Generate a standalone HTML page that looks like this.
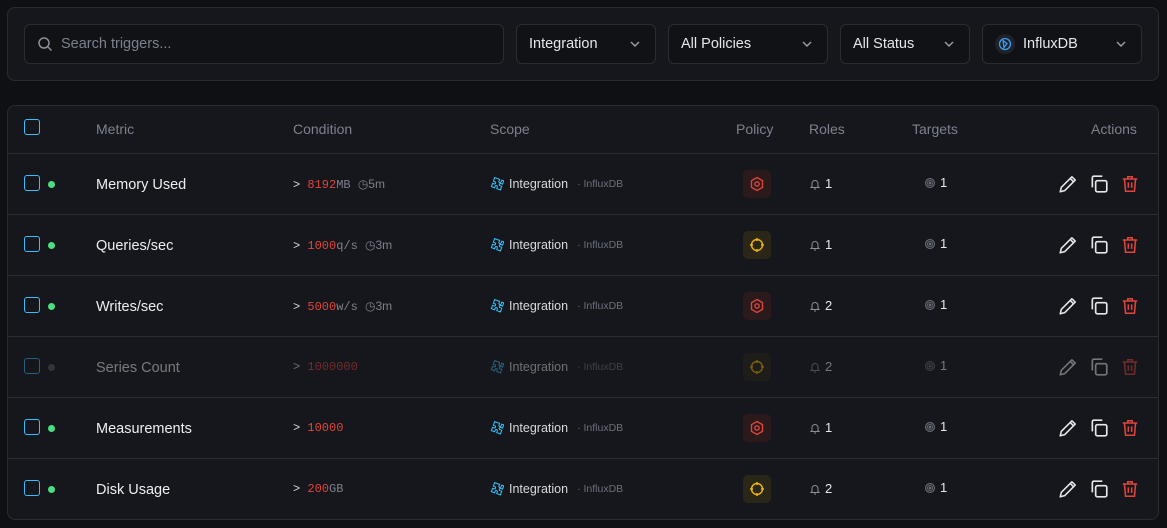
<!DOCTYPE html>
<html><head><meta charset="utf-8"><style>
*{box-sizing:border-box;margin:0;padding:0}
body{width:1167px;height:528px;background:#0f1014;font-family:"Liberation Sans",sans-serif;color:#e6e7ea;position:relative;overflow:hidden}
.abs{position:absolute}
.panel{position:absolute;left:7px;width:1152px;background:#16171c;border:1px solid #2a2c32;border-radius:8px}
.inp{position:absolute;top:24px;height:40px;background:#111216;border:1px solid #2a2c32;border-radius:6px;font-size:14.5px;display:flex;align-items:center;padding-left:12px}
.chev{position:absolute;right:14px;top:13px}
.hdr{position:absolute;top:121px;font-size:14px;color:#7c818d}
.row{position:absolute;left:8px;width:1150px;height:61px;border-top:1px solid #2a2c32}
.row>*{position:absolute}
.cb{left:16px;top:21px;width:16px;height:16px;border:1.5px solid #38bdf8;border-radius:3px}
.dot{left:40px;top:27px;width:7px;height:7px;border-radius:50%;background:#4ade80}
.metric{left:88px;top:23px;font-size:14.5px;color:#eceef1}
.cond{left:285px;top:23px;font-family:"Liberation Mono",monospace;font-size:12px;color:#d8d9dc}
.cond .v{color:#e0443a}.cond .u{color:#7c818d}
.scope{left:482px;top:23px;font-size:12.5px;color:#d8d9dc;display:flex;align-items:center;gap:5px}
.scope .s{font-size:10.5px;color:#6b707b;margin-left:4px}
.pol{left:735px;top:16px;width:28px;height:28px;border-radius:5px;display:flex;align-items:center;justify-content:center}
.roles{left:801px;top:22px;font-size:13px;display:flex;align-items:center;gap:4px}
.tg{left:916px;top:21px;font-size:13px;display:flex;align-items:center;gap:4px}
.act{left:1050px;top:20px;display:flex;gap:11px}
.dim{opacity:.45}
</style></head><body>
<div class="panel" style="top:7px;height:74px"></div>
<div class="inp" style="left:24px;width:480px;color:#7c818d">
<svg width="16" height="16" viewBox="0 0 16 16" fill="none" stroke="#8a8f99" stroke-width="1.5"><circle cx="7" cy="7" r="5"/><path d="M11 11l3.5 3.5"/></svg><span style="margin-left:8px">Search triggers...</span></div>
<div class="inp" style="left:516px;width:140px">Integration<svg class="chev" width="12" height="12" viewBox="0 0 12 12" fill="none" stroke="#9aa0a8" stroke-width="1.4"><path d="M2 4l4 4 4-4"/></svg></div>
<div class="inp" style="left:668px;width:160px">All Policies<svg class="chev" width="12" height="12" viewBox="0 0 12 12" fill="none" stroke="#9aa0a8" stroke-width="1.4"><path d="M2 4l4 4 4-4"/></svg></div>
<div class="inp" style="left:840px;width:130px">All Status<svg class="chev" width="12" height="12" viewBox="0 0 12 12" fill="none" stroke="#9aa0a8" stroke-width="1.4"><path d="M2 4l4 4 4-4"/></svg></div>
<div class="inp" style="left:982px;width:160px"><span style="width:20px;height:20px;border-radius:50%;background:#1f2228;display:flex;align-items:center;justify-content:center"><svg width="14" height="14" viewBox="0 0 14 14" fill="none" stroke="#3b9cf0" stroke-width="1.3"><circle cx="7" cy="7" r="5.5"/><path d="M5 3.5l4 3-3 4z"/></svg></span><span style="margin-left:8px">InfluxDB</span><svg class="chev" width="12" height="12" viewBox="0 0 12 12" fill="none" stroke="#9aa0a8" stroke-width="1.4"><path d="M2 4l4 4 4-4"/></svg></div>

<div class="panel" style="top:105px;height:415px"></div>
<div class="abs" style="left:24px;top:119px;width:16px;height:16px;border:1.5px solid #38bdf8;border-radius:3px"></div>
<div class="hdr" style="left:96px">Metric</div>
<div class="hdr" style="left:293px">Condition</div>
<div class="hdr" style="left:490px">Scope</div>
<div class="hdr" style="left:736px">Policy</div>
<div class="hdr" style="left:809px">Roles</div>
<div class="hdr" style="left:912px">Targets</div>
<div class="hdr" style="left:1091px">Actions</div>

<svg width="0" height="0" style="position:absolute"><defs>
<symbol id="pz" viewBox="0 0 16 16"><path d="M6 2h3v2a1.3 1.3 0 002.6 0V2h2.4v4h-2a1.3 1.3 0 000 2.6h2V13H9.5v-1.8a1.3 1.3 0 00-2.6 0V13H3V9h1.8a1.3 1.3 0 000-2.6H3V2z" fill="none" stroke="#38bdf8" stroke-width="1.2" transform="rotate(20 8 8)"/></symbol>
<symbol id="hex" viewBox="0 0 16 16"><path d="M8 1.5l5.5 3.2v6.6L8 14.5l-5.5-3.2V4.7z" fill="none" stroke="#e0443a" stroke-width="1.4"/><circle cx="8" cy="8" r="2.2" fill="none" stroke="#e0443a" stroke-width="1.4"/></symbol>
<symbol id="cross" viewBox="0 0 16 16"><circle cx="8" cy="8" r="5.5" fill="none" stroke="#eab308" stroke-width="1.5"/><path d="M8 1v3M8 12v3M1 8h3M12 8h3" stroke="#eab308" stroke-width="1.5"/></symbol>
<symbol id="bell" viewBox="0 0 12 12"><path d="M3 8.5V5.5a3 3 0 016 0v3l1 1H2z M5 11h2" fill="none" stroke="#8a8f99" stroke-width="1"/></symbol>
<symbol id="tgt" viewBox="0 0 12 12"><circle cx="6" cy="6" r="5" fill="#6b707b"/><circle cx="6" cy="6" r="3.5" fill="none" stroke="#2a2c32"/><circle cx="6" cy="6" r="1.8" fill="none" stroke="#2a2c32"/></symbol>
<symbol id="pen" viewBox="0 0 18 18"><path d="M12.5 2.5l3 3L6 15l-4 1 1-4z M11 4l3 3" fill="none" stroke="#e6e7ea" stroke-width="1.4" stroke-linejoin="round"/></symbol>
<symbol id="cp" viewBox="0 0 18 18"><rect x="6" y="6" width="10" height="10" rx="1.5" fill="none" stroke="#e6e7ea" stroke-width="1.5"/><path d="M3 12V3.5C3 3 3.5 2 4 2h8" fill="none" stroke="#e6e7ea" stroke-width="1.5"/></symbol>
<symbol id="tr" viewBox="0 0 18 18"><path d="M2.5 4.5h13M7 4.5V2.5h4v2M4 4.5l1 11h8l1-11M7.5 7.5v5M10.5 7.5v5" fill="none" stroke="#e0443a" stroke-width="1.4"/></symbol>
</defs></svg>

<div class="row" style="top:153px">
<div class="cb"></div><div class="dot"></div><div class="metric">Memory Used</div>
<div class="cond">&gt; <span class="v">8192</span><span class="u">MB</span> <span class="u" style="font-family:'Liberation Sans'">◷5m</span></div>
<div class="scope"><svg width="14" height="14"><use href="#pz"/></svg>Integration<span class="s">· InfluxDB</span></div>
<div class="pol" style="background:#2a1a1c"><svg width="16" height="16"><use href="#hex"/></svg></div>
<div class="roles"><svg width="12" height="12"><use href="#bell"/></svg>1</div>
<div class="tg"><svg width="12" height="12"><use href="#tgt"/></svg>1</div>
<div class="act"><svg width="20" height="20"><use href="#pen"/></svg><svg width="20" height="20"><use href="#cp"/></svg><svg width="20" height="20"><use href="#tr"/></svg></div>
</div>
<div class="row" style="top:214px">
<div class="cb"></div><div class="dot"></div><div class="metric">Queries/sec</div>
<div class="cond">&gt; <span class="v">1000</span><span class="u">q/s</span> <span class="u" style="font-family:'Liberation Sans'">◷3m</span></div>
<div class="scope"><svg width="14" height="14"><use href="#pz"/></svg>Integration<span class="s">· InfluxDB</span></div>
<div class="pol" style="background:#2a2618"><svg width="16" height="16"><use href="#cross"/></svg></div>
<div class="roles"><svg width="12" height="12"><use href="#bell"/></svg>1</div>
<div class="tg"><svg width="12" height="12"><use href="#tgt"/></svg>1</div>
<div class="act"><svg width="20" height="20"><use href="#pen"/></svg><svg width="20" height="20"><use href="#cp"/></svg><svg width="20" height="20"><use href="#tr"/></svg></div>
</div>
<div class="row" style="top:275px">
<div class="cb"></div><div class="dot"></div><div class="metric">Writes/sec</div>
<div class="cond">&gt; <span class="v">5000</span><span class="u">w/s</span> <span class="u" style="font-family:'Liberation Sans'">◷3m</span></div>
<div class="scope"><svg width="14" height="14"><use href="#pz"/></svg>Integration<span class="s">· InfluxDB</span></div>
<div class="pol" style="background:#2a1a1c"><svg width="16" height="16"><use href="#hex"/></svg></div>
<div class="roles"><svg width="12" height="12"><use href="#bell"/></svg>2</div>
<div class="tg"><svg width="12" height="12"><use href="#tgt"/></svg>1</div>
<div class="act"><svg width="20" height="20"><use href="#pen"/></svg><svg width="20" height="20"><use href="#cp"/></svg><svg width="20" height="20"><use href="#tr"/></svg></div>
</div>
<div class="row" style="top:336px">
<div class="cb dim"></div><div class="dot" style="background:#33353b"></div><div class="metric dim">Series Count</div>
<div class="cond dim">&gt; <span class="v">1000000</span></div>
<div class="scope dim"><svg width="14" height="14"><use href="#pz"/></svg>Integration<span class="s">· InfluxDB</span></div>
<div class="pol dim" style="background:#2a2618"><svg width="16" height="16"><use href="#cross"/></svg></div>
<div class="roles dim"><svg width="12" height="12"><use href="#bell"/></svg>2</div>
<div class="tg dim"><svg width="12" height="12"><use href="#tgt"/></svg>1</div>
<div class="act dim"><svg width="20" height="20"><use href="#pen"/></svg><svg width="20" height="20"><use href="#cp"/></svg><svg width="20" height="20"><use href="#tr"/></svg></div>
</div>
<div class="row" style="top:397px">
<div class="cb"></div><div class="dot"></div><div class="metric">Measurements</div>
<div class="cond">&gt; <span class="v">10000</span></div>
<div class="scope"><svg width="14" height="14"><use href="#pz"/></svg>Integration<span class="s">· InfluxDB</span></div>
<div class="pol" style="background:#2a1a1c"><svg width="16" height="16"><use href="#hex"/></svg></div>
<div class="roles"><svg width="12" height="12"><use href="#bell"/></svg>1</div>
<div class="tg"><svg width="12" height="12"><use href="#tgt"/></svg>1</div>
<div class="act"><svg width="20" height="20"><use href="#pen"/></svg><svg width="20" height="20"><use href="#cp"/></svg><svg width="20" height="20"><use href="#tr"/></svg></div>
</div>
<div class="row" style="top:458px">
<div class="cb"></div><div class="dot"></div><div class="metric">Disk Usage</div>
<div class="cond">&gt; <span class="v">200</span><span class="u">GB</span></div>
<div class="scope"><svg width="14" height="14"><use href="#pz"/></svg>Integration<span class="s">· InfluxDB</span></div>
<div class="pol" style="background:#2a2618"><svg width="16" height="16"><use href="#cross"/></svg></div>
<div class="roles"><svg width="12" height="12"><use href="#bell"/></svg>2</div>
<div class="tg"><svg width="12" height="12"><use href="#tgt"/></svg>1</div>
<div class="act"><svg width="20" height="20"><use href="#pen"/></svg><svg width="20" height="20"><use href="#cp"/></svg><svg width="20" height="20"><use href="#tr"/></svg></div>
</div>
</body></html>
